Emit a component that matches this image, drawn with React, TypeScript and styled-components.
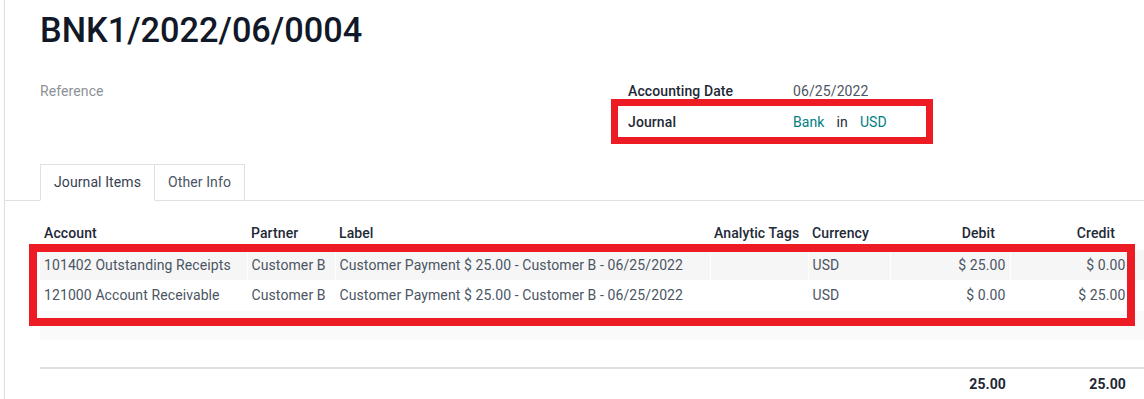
import styled, { createGlobalStyle } from 'styled-components'

const GlobalStyle = createGlobalStyle`
  html, body { margin: 0; padding: 0; background: #ffffff; }
  body {
    font-family: Roboto, "Noto Sans", "Liberation Sans", sans-serif;
    font-size: 14px;
    letter-spacing: 0.1px;
    color: #212529;
    overflow: hidden;
  }
`

const MARK_RED = '#ed1c24'

const Page = styled.div`
  margin-left: 4px;
  border-left: 1px solid #dcdee4;
  min-height: 399px;
  padding-top: 9px;
  box-sizing: border-box;
`

const Title = styled.h1`
  margin: 0 0 0 35px;
  font-size: 34.3px;
  line-height: 42px;
  font-weight: 500;
  letter-spacing: 0;
  color: #111827;
`

const FieldsGrid = styled.div`
  display: grid;
  grid-template-columns: 588px 1fr;
  margin-top: 24px;
  padding-left: 35px;
`

const FieldGroup = styled.div`
  display: flex;
  flex-direction: column;
`

const FieldRow = styled.div<{ $marked?: boolean }>`
  position: relative;
  display: grid;
  grid-template-columns: 165px auto;
  align-items: center;
  height: 31px;

  ${({ $marked }) =>
    $marked &&
    `
    &::after {
      content: '';
      position: absolute;
      top: -7px;
      bottom: -7px;
      left: -17px;
      width: 322px;
      border: 7px solid ${MARK_RED};
      box-sizing: border-box;
      pointer-events: none;
    }
  `}
`

const Placeholder = styled.span`
  color: #8d9196;
`

const Label = styled.span`
  font-weight: 500;
  color: #1f2937;
`

const Value = styled.span`
  display: flex;
  gap: 12px;
  color: #4b5563;
`

const Link = styled.span`
  color: #017e84;
`

const Plain = styled.span`
  color: #1f2937;
`

const TabNav = styled.div`
  display: flex;
  margin-top: 27px;
  padding-left: 35px;
  border-bottom: 1px solid #dee2e6;
`

const Tab = styled.div<{ $active?: boolean }>`
  padding: 0 13px;
  line-height: 35px;
  border: 1px solid #dee2e6;
  margin-bottom: -1px;
  color: ${({ $active }) => ($active ? '#374151' : '#4b5563')};
  border-bottom-color: ${({ $active }) => ($active ? '#ffffff' : '#dee2e6')};
  & + & { border-left: none; }
`

const TableWrap = styled.div`
  position: relative;
  margin: 15px 0 0 35px;
`

const Mark = styled.div`
  position: absolute;
  top: 28px;
  left: -11px;
  width: 1106px;
  height: 82px;
  border: 8px solid ${MARK_RED};
  box-sizing: border-box;
  pointer-events: none;
`

const Table = styled.table`
  width: 1104px;
  table-layout: fixed;
  border-collapse: collapse;
`

const Th = styled.th<{ $right?: boolean }>`
  height: 34px;
  padding: 0 ${({ $right }) => ($right ? '15px' : '4px')} 0 4px;
  text-align: ${({ $right }) => ($right ? 'right' : 'left')};
  font-weight: 500;
  color: #1f2937;
  white-space: nowrap;
  overflow: hidden;
`

const Row = styled.tr<{ $shade?: string; $h?: number; $filler?: boolean }>`
  height: ${({ $h }) => $h ?? 30}px;
  background: ${({ $shade }) => $shade ?? '#ffffff'};
  & + & { border-top: 1px solid ${({ $filler }) => ($filler ? 'transparent' : '#e9ebee')}; }
`

const Td = styled.td<{ $right?: boolean }>`
  padding: 0 4px;
  text-align: ${({ $right }) => ($right ? 'right' : 'left')};
  color: #4b5563;
  white-space: nowrap;
  overflow: hidden;
  & + & { border-left: 1px solid #ffffff; }
`

const FootRow = styled.tr`
  height: 30px;
  border-top: 2px solid #dcdfe3;
`

const FootTd = styled.td`
  padding: 0 4px;
  text-align: right;
  font-weight: 700;
  color: #1f2937;
`

const lines = [
  { account: '101402 Outstanding Receipts', debit: '$ 25.00', credit: '$ 0.00' },
  { account: '121000 Account Receivable', debit: '$ 0.00', credit: '$ 25.00' },
]

export default function App() {
  return (
    <>
      <GlobalStyle />
      <Page>
        <Title>BNK1/2022/06/0004</Title>

        <FieldsGrid>
          <FieldGroup>
            <FieldRow>
              <Placeholder>Reference</Placeholder>
            </FieldRow>
          </FieldGroup>
          <FieldGroup>
            <FieldRow>
              <Label>Accounting Date</Label>
              <Value>06/25/2022</Value>
            </FieldRow>
            <FieldRow $marked>
              <Label>Journal</Label>
              <Value>
                <Link>Bank</Link>
                <Plain>in</Plain>
                <Link>USD</Link>
              </Value>
            </FieldRow>
          </FieldGroup>
        </FieldsGrid>

        <TabNav>
          <Tab $active>Journal Items</Tab>
          <Tab>Other Info</Tab>
        </TabNav>

        <TableWrap>
          <Table>
            <colgroup>
              <col style={{ width: 207 }} />
              <col style={{ width: 88 }} />
              <col style={{ width: 375 }} />
              <col style={{ width: 98 }} />
              <col style={{ width: 82 }} />
              <col style={{ width: 120 }} />
              <col style={{ width: 120 }} />
              <col style={{ width: 14 }} />
            </colgroup>
            <thead>
              <tr>
                <Th>Account</Th>
                <Th>Partner</Th>
                <Th>Label</Th>
                <Th>Analytic Tags</Th>
                <Th>Currency</Th>
                <Th $right>Debit</Th>
                <Th $right>Credit</Th>
                <Th />
              </tr>
            </thead>
            <tbody>
              {lines.map((line, i) => (
                <Row key={line.account} $shade={i % 2 === 0 ? '#f6f6f6' : undefined}>
                  <Td>{line.account}</Td>
                  <Td>Customer B</Td>
                  <Td>Customer Payment $ 25.00 - Customer B - 06/25/2022</Td>
                  <Td />
                  <Td>USD</Td>
                  <Td $right>{line.debit}</Td>
                  <Td $right>{line.credit}</Td>
                  <Td />
                </Row>
              ))}
              <Row $shade="#fafafa">
                <Td colSpan={8} />
              </Row>
              <Row $h={28} $filler>
                <Td colSpan={8} />
              </Row>
            </tbody>
            <tfoot>
              <FootRow>
                <FootTd colSpan={5} />
                <FootTd>25.00</FootTd>
                <FootTd>25.00</FootTd>
                <FootTd />
              </FootRow>
            </tfoot>
          </Table>
          <Mark />
        </TableWrap>
      </Page>
    </>
  )
}
